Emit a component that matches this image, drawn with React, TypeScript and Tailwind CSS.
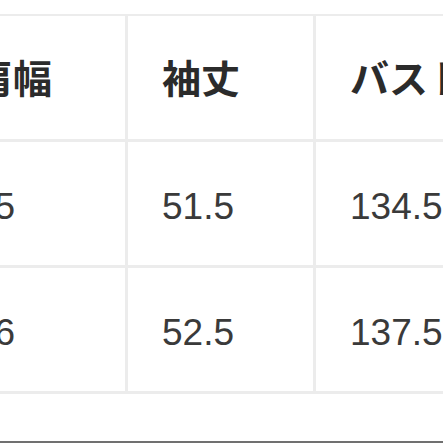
const headers = ["肩幅", "袖丈", "バスト"];
const rows = [
  ["45", "51.5", "134.5"],
  ["46", "52.5", "137.5"],
];

export default function App() {
  return (
    <div className="w-[443px] h-[443px] overflow-hidden bg-white flex flex-col">
      <div className="ml-[-63px] mt-[14px] w-[570px] border-t-2 border-[#ececec] shrink-0">
        {/* Header row */}
        <div className="flex h-[126px] border-l-[3px] border-b-[3px] border-[#ececec]">
          {headers.map((h) => (
            <div
              key={h}
              className="w-[188px] shrink-0 border-r-[3px] border-[#ececec] flex items-center pl-[34px] pb-[2px] text-[39px] font-bold text-[#2b2b2b] font-['Noto_Sans_CJK_JP',sans-serif] leading-none"
            >
              {h}
            </div>
          ))}
        </div>
        {/* Data rows */}
        {rows.map((r, i) => (
          <div
            key={i}
            className="flex h-[126px] border-l-[3px] border-b-[3px] border-[#ececec]"
          >
            {r.map((v, j) => (
              <div
                key={j}
                className="w-[188px] shrink-0 border-r-[3px] border-[#ececec] flex items-center pl-[34px] pt-[6px] text-[37px] text-[#3a3a3a] font-['Liberation_Sans',Arial,sans-serif] leading-none"
              >
                {v}
              </div>
            ))}
          </div>
        ))}
      </div>
      <div className="flex-1" />
      <div className="h-[2px] bg-[#707070] shrink-0" />
    </div>
  );
}
